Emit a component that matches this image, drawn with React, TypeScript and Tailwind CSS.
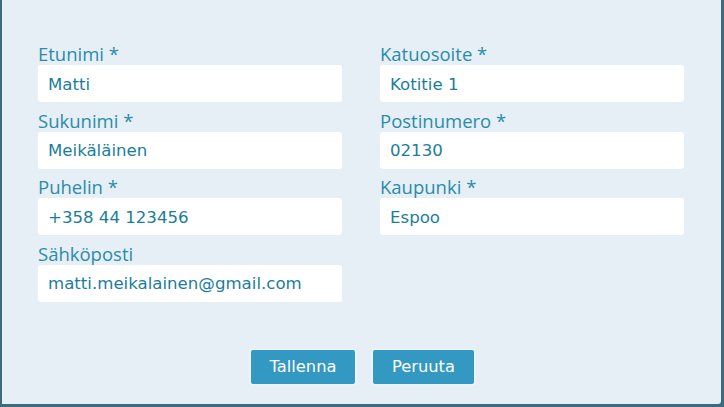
const KENTAT_VASEN = [
  { label: 'Etunimi *', arvo: 'Matti' },
  { label: 'Sukunimi *', arvo: 'Meikäläinen' },
  { label: 'Puhelin *', arvo: '+358 44 123456' },
  { label: 'Sähköposti', arvo: 'matti.meikalainen@gmail.com' },
]

const KENTAT_OIKEA = [
  { label: 'Katuosoite *', arvo: 'Kotitie 1' },
  { label: 'Postinumero *', arvo: '02130' },
  { label: 'Kaupunki *', arvo: 'Espoo' },
]

function Kentta({ label, arvo }: { label: string; arvo: string }) {
  return (
    <div className="flex flex-col">
      <label className="font-['Open_Sans',sans-serif] text-[18.5px] leading-[20px] text-[#2a8cab] mb-[1px]">
        {label}
      </label>
      <input
        readOnly
        value={arvo}
        className="h-[37px] w-full rounded-[3px] bg-white px-[10px] pt-[1px] font-['DejaVu_Sans',sans-serif] text-[16.6px] text-[#1b7d9e] outline-none"
      />
    </div>
  )
}

export default function App() {
  return (
    <div className="w-[724px] h-[407px] bg-[#3c6b7e] overflow-hidden">
      <div className="ml-[2px] w-[719px] h-[404px] bg-[#e6eff6] rounded-br-[3px] pt-[44px] px-[36px]">
        <div className="grid grid-cols-[304px_304px] gap-x-[38px]">
          <div className="flex flex-col gap-y-[8.5px]">
            {KENTAT_VASEN.map(k => <Kentta key={k.label} {...k} />)}
          </div>
          <div className="flex flex-col gap-y-[8.5px]">
            {KENTAT_OIKEA.map(k => <Kentta key={k.label} {...k} />)}
          </div>
        </div>

        <div className="mt-[48.5px] flex justify-center gap-[18px] ml-[2px]">
          <button className="h-[34px] w-[104px] rounded-[2px] bg-[#3399c3] text-white font-['DejaVu_Sans',sans-serif] text-[16.3px] shadow-[0_0_0_2px_rgba(255,255,255,0.3)]">
            Tallenna
          </button>
          <button className="h-[34px] w-[101px] rounded-[2px] bg-[#3399c3] text-white font-['DejaVu_Sans',sans-serif] text-[16.3px] shadow-[0_0_0_2px_rgba(255,255,255,0.3)]">
            Peruuta
          </button>
        </div>
      </div>
    </div>
  )
}
